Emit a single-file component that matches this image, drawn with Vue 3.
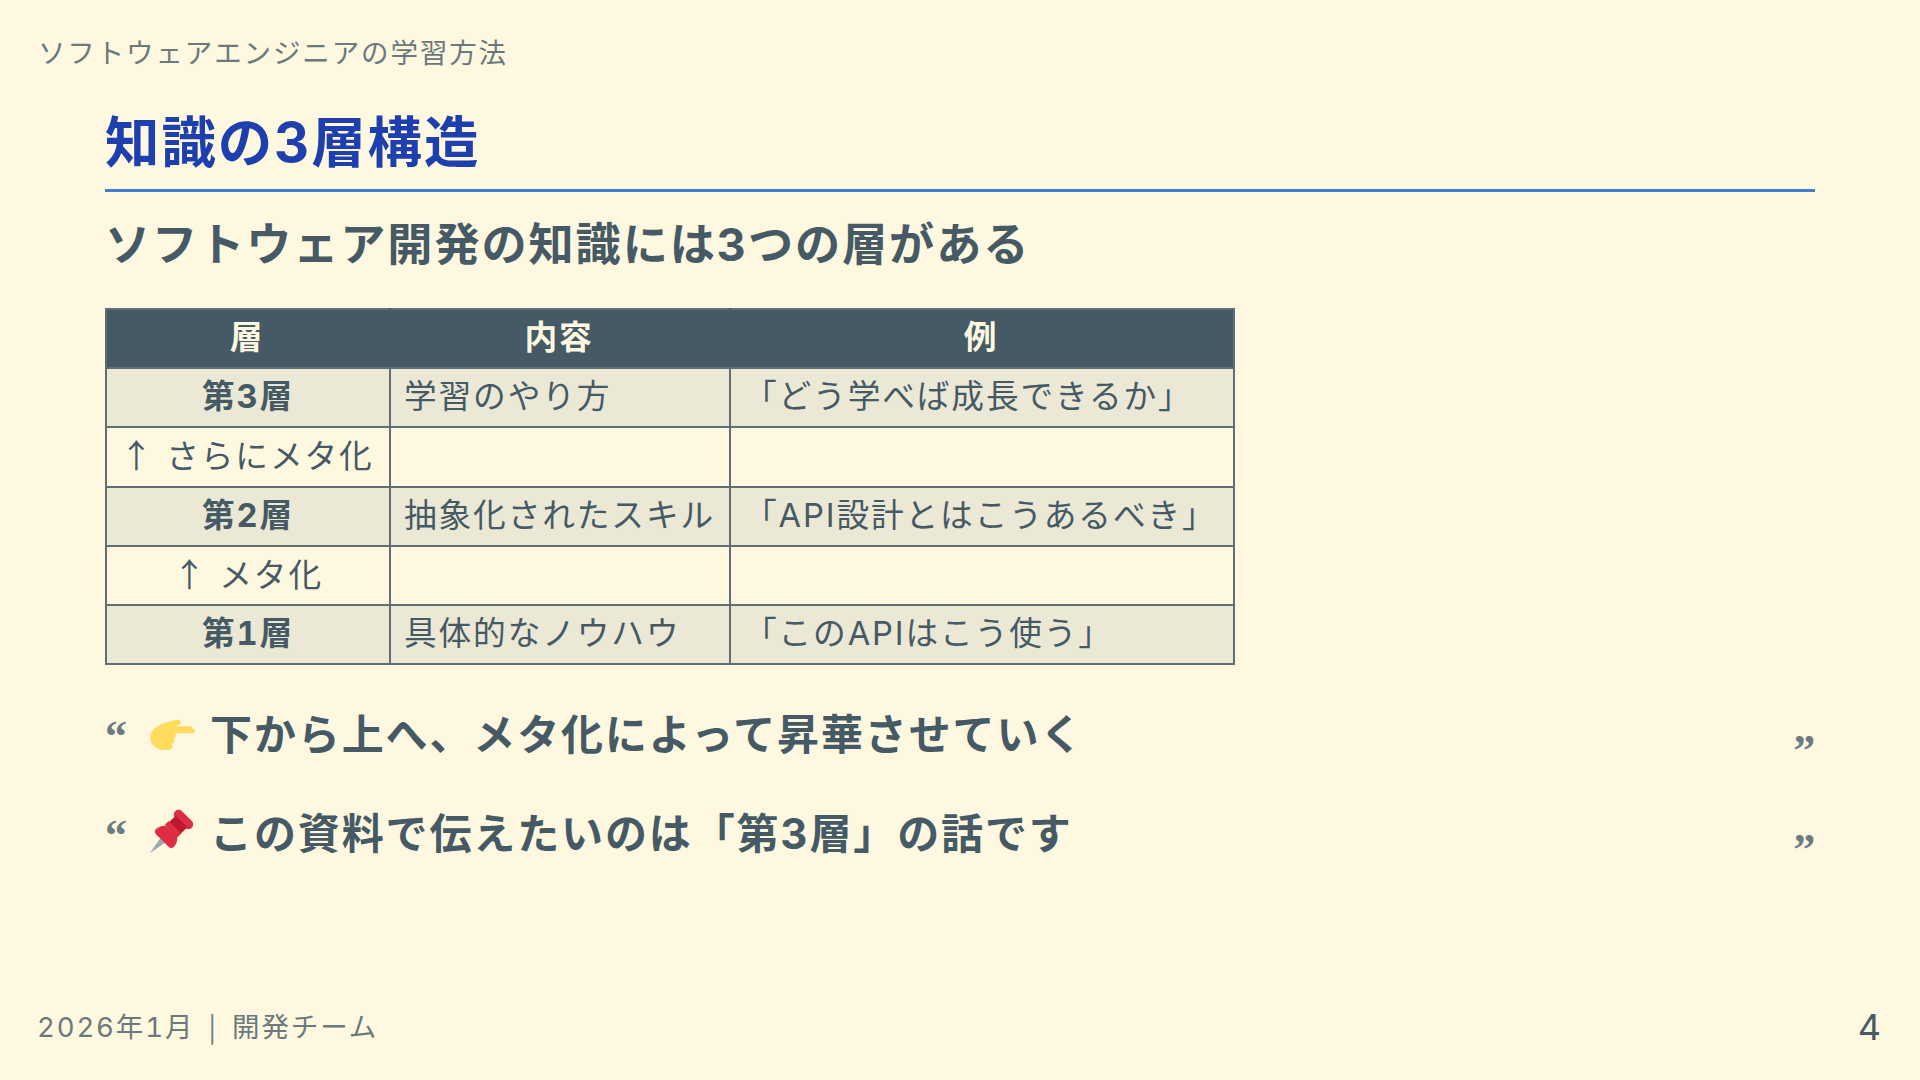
<script setup>
const rows = [
  { head: '第3層', content: '学習のやり方', example: '「どう学べば成長できるか」', strong: true },
  { arrow: '↑', head: ' さらにメタ化', content: '', example: '', wide: true },
  { head: '第2層', content: '抽象化されたスキル', example: '「API設計とはこうあるべき」', strong: true },
  { arrow: '↑', head: ' メタ化', content: '', example: '' },
  { head: '第1層', content: '具体的なノウハウ', example: '「このAPIはこう使う」', strong: true },
]
</script>

<template>
  <div class="slide">
    <header class="top">ソフトウェアエンジニアの学習方法</header>
    <main class="body">
      <h1 class="title">知識の3層構造</h1>
      <h2 class="sub">ソフトウェア開発の知識には3つの層がある</h2>
      <table class="grid">
        <thead>
          <tr>
            <th class="c1">層</th>
            <th class="c2">内容</th>
            <th class="c3">例</th>
          </tr>
        </thead>
        <tbody>
          <tr v-for="(r, i) in rows" :key="i" :class="{ alt: r.strong }">
            <td class="center" :class="{ bold: r.strong, wide: r.wide }"><span v-if="r.arrow" class="cjk">{{ r.arrow }}</span>{{ r.head }}</td>
            <td>{{ r.content }}</td>
            <td>{{ r.example }}</td>
          </tr>
        </tbody>
      </table>
      <blockquote class="quote first">
        <svg class="emoji" viewBox="0 0 36 36" aria-hidden="true">
          <path fill="#FFDC5D" d="M34 13.500H21.500c.9-.4 2-1 2.900-1.800 1.200-1.100.8-3.400-1.400-3.300-2.500.1-6.500 1-9 2C8 12.500 1 15.500 1 22c0 5.500 4.500 10 10 10h4c2 0 3.500-1.200 3.500-2.800 0-.7-.2-1.300-.6-1.800 1.200-.4 2-1.400 2-2.600 0-.7-.2-1.300-.6-1.800 1-.5 1.600-1.400 1.600-2.500 0-.6-.2-1.100-.4-1.500H34c1.400 0 2-.8 2-1.750s-.6-1.750-2-1.750z"/>
        </svg>
        <span>下から上へ、メタ化によって昇華させていく</span>
      </blockquote>
      <blockquote class="quote">
        <svg class="emoji" viewBox="0 0 36 36" aria-hidden="true">
          <path fill="#99AAB5" d="M.6 35.400l11.600-16.700 5.100 5.100z"/>
          <path fill="#DD2E44" d="M5.500 16.500c2-2 5.500-3 8-2.500l8.500 8.500c.5 2.500-.5 6-2.500 8-1.200 1.200-2.800 1.200-4 0l-10-10c-1.200-1.200-1.200-2.800 0-4z"/>
          <path fill="#DD2E44" d="M20.500 2.500c1.500-1.500 3.800-1.500 5.300 0l7.700 7.700c1.500 1.500 1.500 3.800 0 5.300-1.500 1.500-3.800 1.500-5.300 0l-7.700-7.700c-1.500-1.500-1.500-3.800 0-5.300z"/>
          <path fill="#BE1931" d="M13 13.500l8-7.500 9 9-8 8z"/>
          <path fill="#DD2E44" d="M12.500 13l3-2.800 9.500 9.500-3 3z"/>
        </svg>
        <span>この資料で伝えたいのは「第3層」の話です</span>
      </blockquote>
    </main>
    <footer class="bottom">
      <span class="note">2026年1月 <span class="cjk">|</span> 開発チーム</span>
      <span class="page">4</span>
    </footer>
  </div>
</template>

<style>
html, body { margin: 0; background: #fff8e1; }
</style>

<style scoped>
.slide {
  width: 1920px;
  height: 1080px;
  box-sizing: border-box;
  display: flex;
  flex-direction: column;
  overflow: hidden;
  background: #fff8e1;
  color: #455a64;
  font-family: Inter, "Noto Sans CJK JP", "Noto Sans", sans-serif;
  font-variant-numeric: tabular-nums;
  letter-spacing: 1.875px;
}
.cjk { font-family: "Noto Sans CJK JP", sans-serif; }
.top {
  padding: 32.5px 0 0 38px;
  font-size: 27.5px;
  line-height: 40px;
  opacity: 0.8;
}
.body {
  display: flex;
  flex-direction: column;
  align-items: flex-start;
  padding: 0 105px;
}
.title {
  align-self: stretch;
  margin: 34.5px 0 0;
  padding-bottom: 12px;
  border-bottom: 3px solid #3f7bd0;
  color: #1e40af;
  font-size: 54.5px;
  line-height: 70px;
  font-weight: 700;
}
.sub {
  margin: 21.5px 0 0;
  font-size: 45.2px;
  line-height: 62px;
  font-weight: 700;
}
.grid {
  margin-top: 32.5px;
  border-collapse: collapse;
  table-layout: fixed;
  width: 1130px;
  font-size: 32.7px;
  line-height: 44px;
}
.c1 { width: 284px; }
.c2 { width: 340px; }
th {
  height: 59px;
  padding: 0 2px 2.5px 0;
  box-sizing: border-box;
  background: #455a64;
  color: #fff8e1;
  font-weight: 700;
  text-align: center;
  border: 2px solid #5f6f76;
  border-left-color: #455a64;
  border-right-color: #455a64;
}
th.c1 { border-left-color: #5f6f76; }
th.c3 { border-right-color: #5f6f76; }
td {
  height: 59.3px;
  padding: 0 13px 3px;
  box-sizing: border-box;
  border: 2px solid #5f6f76;
  white-space: nowrap;
}
.alt td { background: #ece8d6; }
td.center { text-align: center; word-spacing: 1px; }
td.wide { padding-right: 21px; }
.bold { font-weight: 700; }
.quote {
  position: relative;
  align-self: stretch;
  display: flex;
  align-items: center;
  gap: 15px;
  margin: 33px 0 0;
  padding: 0 42px 0 44px;
  height: 66px;
  font-size: 42px;
  font-weight: 700;
}
.first { margin-top: 33.5px; }
.quote::before,
.quote::after {
  position: absolute;
  font-family: "Liberation Serif", serif;
  font-size: 44px;
  font-weight: 700;
  line-height: 1;
  color: #6b7b82;
}
.quote::before { content: "\201C"; left: 0; top: 16px; }
.quote::after { content: "\201D"; right: -2px; top: 30px; }
.emoji { width: 46px; height: 46px; flex: none; }
.bottom {
  margin-top: auto;
  padding: 0 37px 31px;
  display: flex;
  justify-content: space-between;
  align-items: center;
  word-spacing: 5px;
}
.note { font-size: 27.5px; opacity: 0.8; }
.page { font-size: 36px; padding-top: 4px; }
</style>
